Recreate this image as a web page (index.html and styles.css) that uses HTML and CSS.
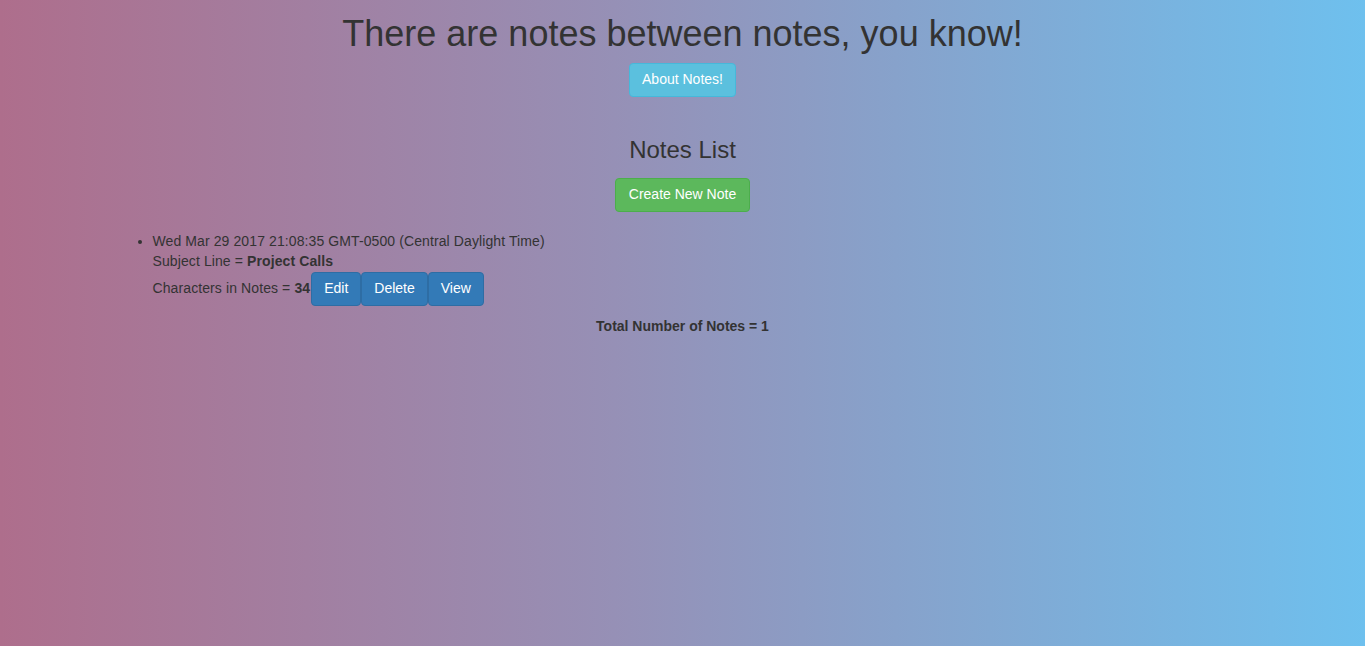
FILE: index.html
```html
<!DOCTYPE html>
<html>
<head>
<meta charset="utf-8">
<title>Notes</title>
<link rel="stylesheet" href="styles.css">
</head>
<body>
<div class="container">
  <header class="hero">
    <h1 class="title">There are notes between notes, you know!</h1>
    <button class="btn btn-info">About Notes!</button>
  </header>
  <section class="notes">
    <h3 class="section-title">Notes List</h3>
    <button class="btn btn-success">Create New Note</button>
    <ul class="note-list">
      <li class="note">
        <div class="note-line">Wed Mar 29 2017 21:08:35 GMT-0500 (Central Daylight Time)</div>
        <div class="note-line">Subject Line = <b>Project Calls</b></div>
        <div class="note-line actions"><span class="label">Characters in Notes = <b>34</b></span><button class="btn btn-primary">Edit</button><button class="btn btn-primary">Delete</button><button class="btn btn-primary">View</button></div>
      </li>
    </ul>
    <p class="total"><b>Total Number of Notes = 1</b></p>
  </section>
</div>
</body>
</html>
```

FILE: styles.css
```css
html, body {
  margin: 0;
  height: 100%;
}
body {
  font-family: "Liberation Sans", Arial, sans-serif;
  font-size: 14px;
  line-height: 1.42857;
  color: #333;
  background: linear-gradient(to right, #ae6e8c 0%, #9690b6 45%, #6ec0ee 100%);
  min-height: 646px;
}
.container {
  width: 1170px;
  padding: 0 15px;
  margin: 0 auto;
  box-sizing: border-box;
}
.hero, .notes {
  text-align: center;
}
.title {
  font-size: 36px;
  font-weight: 500;
  line-height: 1.1;
  margin: 14px 0 9px;
}
.btn {
  display: inline-block;
  font-family: inherit;
  font-size: 14px;
  line-height: 1.42857;
  padding: 6px 12px;
  border: 1px solid transparent;
  border-radius: 4px;
  color: #fff;
  cursor: pointer;
  vertical-align: middle;
  margin: 0;
}
.btn-info {
  background: #5bc0de;
  border-color: #46b8da;
}
.btn-success {
  background: #5cb85c;
  border-color: #4cae4c;
  padding: 6px 13px;
}
.btn-primary {
  background: #337ab7;
  border-color: #2e6da4;
}
.section-title {
  font-size: 24px;
  font-weight: 500;
  line-height: 1.1;
  margin: 40px 0 15px;
}
.note-list {
  text-align: left;
  margin: 20px 0 0;
  padding-left: 40px;
}
.note-line {
  letter-spacing: 0.1px;
}
.note-line.actions {
  display: flex;
  align-items: center;
}
.note-line.actions .label {
  margin-right: 1px;
}
.total {
  margin: 11px 0 10px;
}
```
